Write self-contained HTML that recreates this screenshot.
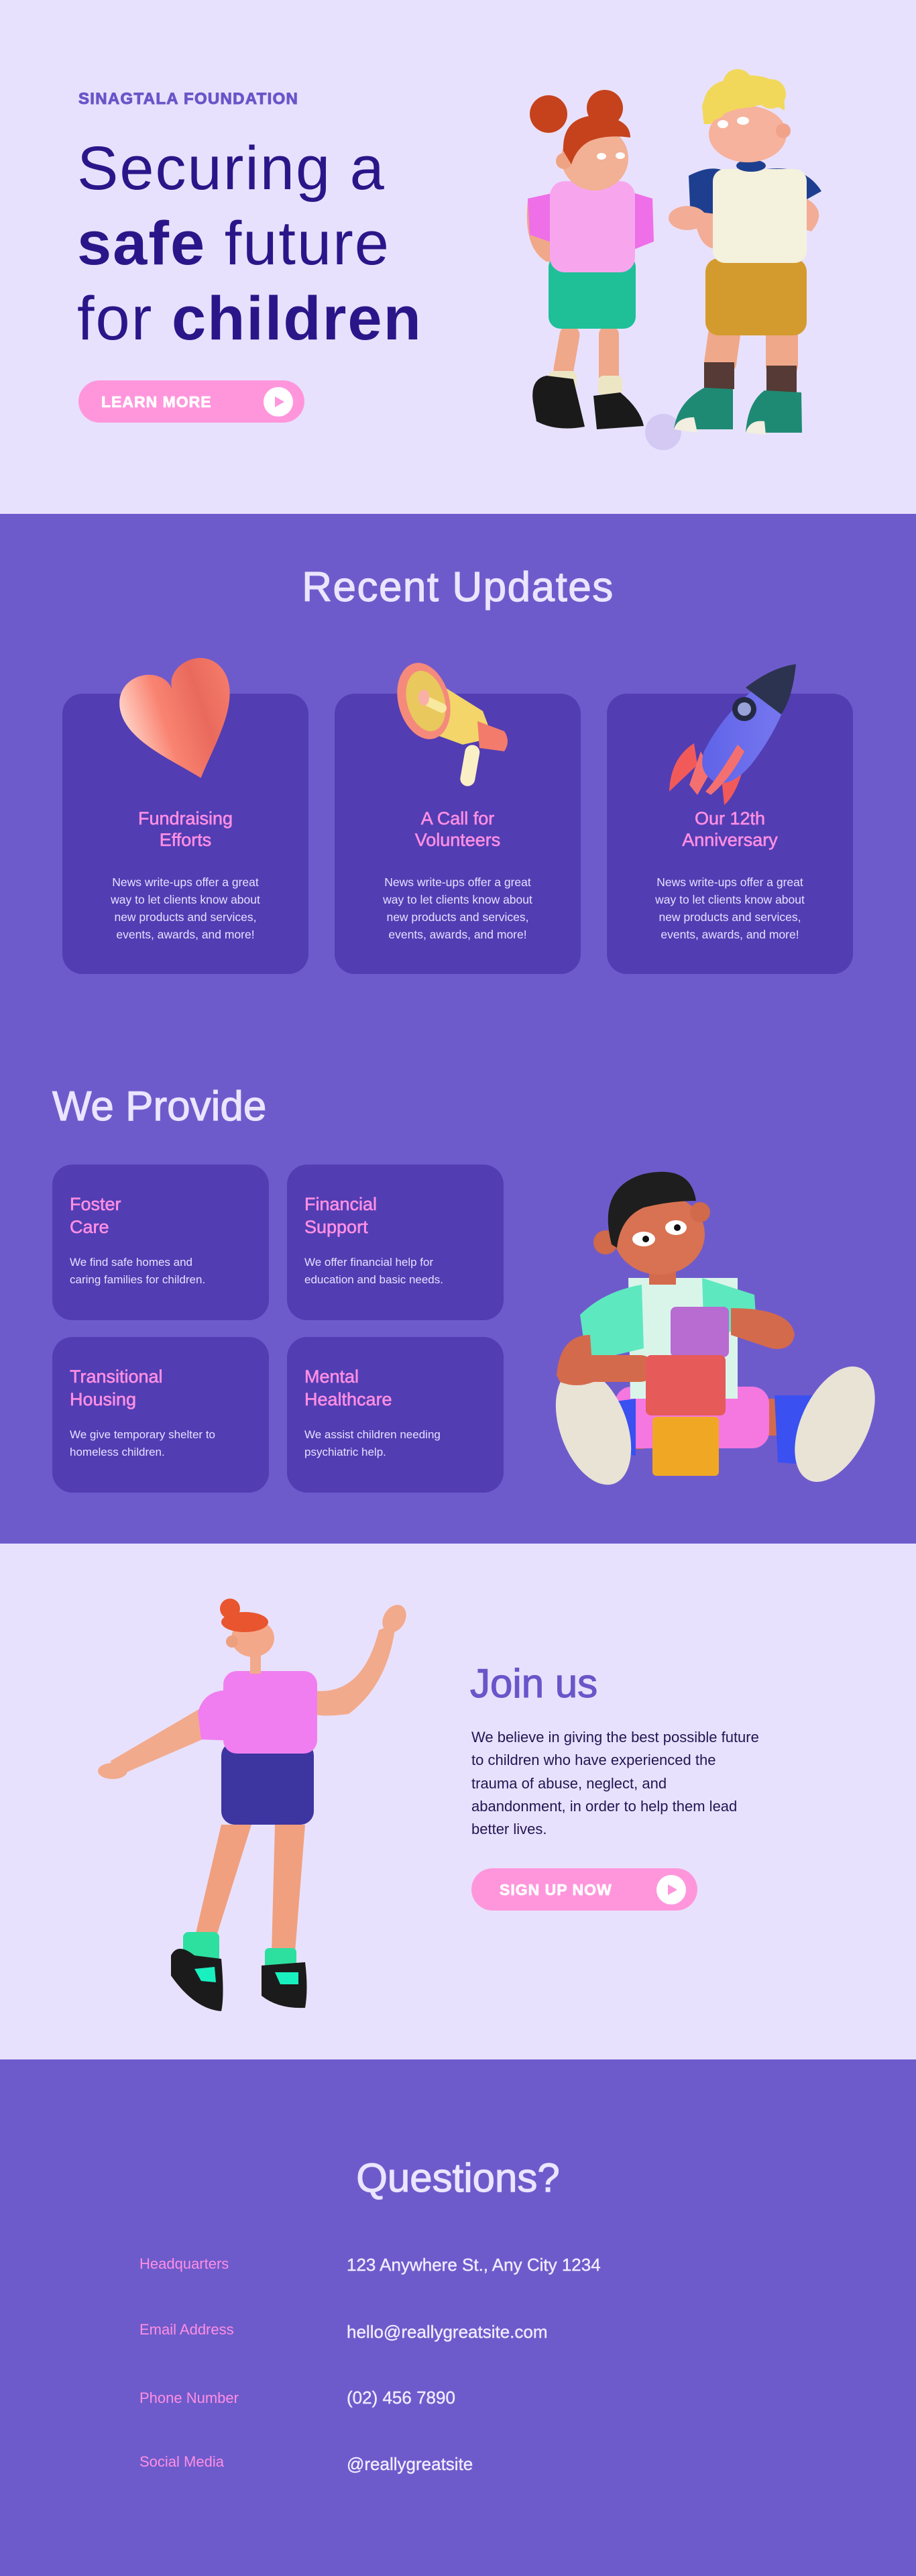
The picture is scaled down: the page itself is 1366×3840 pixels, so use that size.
<!DOCTYPE html>
<html><head><meta charset="utf-8">
<style>
*{margin:0;padding:0;box-sizing:border-box}
html,body{width:1366px;height:3840px;overflow:hidden}
body{position:relative;font-family:"Liberation Sans",sans-serif;background:#6e5bcb}
.abs{position:absolute}
.sec{position:absolute;left:0;width:1366px}
.t{position:absolute;white-space:nowrap}
.med{-webkit-text-stroke:1.2px currentColor}
.card{position:absolute;background:#523db3;border-radius:30px}
.ct{position:absolute;left:0;right:0;text-align:center;color:#ff8fe3;font-size:27px;line-height:32px;-webkit-text-stroke:0.6px #ff8fe3}
.cb{position:absolute;left:0;right:0;text-align:center;color:#e8e0ff;font-size:17.5px;line-height:26px}
.pt{position:absolute;left:26px;color:#ff8fe3;font-size:27px;line-height:34px;-webkit-text-stroke:0.6px #ff8fe3}
.pb{position:absolute;left:26px;color:#e8e0ff;font-size:17px;line-height:26px}
.btn{position:absolute;background:#ff96dc;border-radius:32px}
.btn span{position:absolute;color:#fff;font-weight:bold;font-size:23px;letter-spacing:1px;-webkit-text-stroke:0.8px #fff}
.btn i{position:absolute;background:#fff;border-radius:50%}
.lab{position:absolute;left:208px;color:#ff8fe3;font-size:22px}
.val{position:absolute;left:517px;color:#f0ebff;font-size:26px;-webkit-text-stroke:0.4px #f0ebff}
</style></head><body>

<!-- HERO -->
<div class="sec" style="top:0;height:766px;background:#e8e1fd"></div>
<div class="t" style="left:117px;top:134px;font-size:24px;font-weight:bold;color:#6b55c9;letter-spacing:1.3px;-webkit-text-stroke:1px #6b55c9">SINAGTALA FOUNDATION</div>
<div class="t" style="left:115px;top:195px;font-size:92px;line-height:112px;color:#2b1689;letter-spacing:2px">Securing a<br><b>safe</b> future<br>for <b>children</b></div>
<div class="btn" style="left:117px;top:567px;width:337px;height:63px">
  <span style="left:34px;top:19px">LEARN MORE</span>
  <i style="left:276px;top:10px;width:44px;height:44px"></i>
  <svg class="abs" style="left:290px;top:22px" width="20" height="20"><polygon points="3,2 17,10 3,18" fill="#ff96dc"/></svg>
</div>

<!-- RECENT UPDATES -->
<div class="t med" style="left:0;width:1366px;text-align:center;top:840px;font-size:62px;color:#ebe5ff;letter-spacing:1.5px">Recent Updates</div>
<div class="card" style="left:93px;top:1034px;width:367px;height:418px">
  <div class="ct" style="top:170px">Fundraising<br>Efforts</div>
  <div class="cb" style="top:268px">News write-ups offer a great<br>way to let clients know about<br>new products and services,<br>events, awards, and more!</div>
</div>
<div class="card" style="left:499px;top:1034px;width:367px;height:418px">
  <div class="ct" style="top:170px">A Call for<br>Volunteers</div>
  <div class="cb" style="top:268px">News write-ups offer a great<br>way to let clients know about<br>new products and services,<br>events, awards, and more!</div>
</div>
<div class="card" style="left:905px;top:1034px;width:367px;height:418px">
  <div class="ct" style="top:170px">Our 12th<br>Anniversary</div>
  <div class="cb" style="top:268px">News write-ups offer a great<br>way to let clients know about<br>new products and services,<br>events, awards, and more!</div>
</div>

<!-- WE PROVIDE -->
<div class="t med" style="left:78px;top:1614px;font-size:62px;color:#ebe5ff">We Provide</div>
<div class="card" style="left:78px;top:1736px;width:323px;height:232px">
  <div class="pt" style="top:42px">Foster<br>Care</div>
  <div class="pb" style="top:133px">We find safe homes and<br>caring families for children.</div>
</div>
<div class="card" style="left:428px;top:1736px;width:323px;height:232px">
  <div class="pt" style="top:42px">Financial<br>Support</div>
  <div class="pb" style="top:133px">We offer financial help for<br>education and basic needs.</div>
</div>
<div class="card" style="left:78px;top:1993px;width:323px;height:232px">
  <div class="pt" style="top:42px">Transitional<br>Housing</div>
  <div class="pb" style="top:133px">We give temporary shelter to<br>homeless children.</div>
</div>
<div class="card" style="left:428px;top:1993px;width:323px;height:232px">
  <div class="pt" style="top:42px">Mental<br>Healthcare</div>
  <div class="pb" style="top:133px">We assist children needing<br>psychiatric help.</div>
</div>

<!-- JOIN US -->
<div class="sec" style="top:2301px;height:769px;background:#e8e1fd"></div>
<div class="t med" style="left:701px;top:2475px;font-size:60px;color:#6b55c9">Join us</div>
<div class="t" style="left:703px;top:2573px;font-size:22px;line-height:34.3px;color:#231552">We believe in giving the best possible future<br>to children who have experienced the<br>trauma of abuse, neglect, and<br>abandonment, in order to help them lead<br>better lives.</div>
<div class="btn" style="left:703px;top:2785px;width:337px;height:63px">
  <span style="left:42px;top:19px">SIGN UP NOW</span>
  <i style="left:276px;top:10px;width:44px;height:44px"></i>
  <svg class="abs" style="left:290px;top:22px" width="20" height="20"><polygon points="3,2 17,10 3,18" fill="#ff96dc"/></svg>
</div>

<!-- QUESTIONS -->
<div class="t med" style="left:0;width:1366px;text-align:center;top:3212px;font-size:60px;color:#ebe5ff">Questions?</div>
<div class="lab" style="top:3362px">Headquarters</div>
<div class="val" style="top:3361px">123 Anywhere St., Any City 1234</div>
<div class="lab" style="top:3460px">Email Address</div>
<div class="val" style="top:3461px">hello@reallygreatsite.com</div>
<div class="lab" style="top:3562px">Phone Number</div>
<div class="val" style="top:3559px">(02) 456 7890</div>
<div class="lab" style="top:3657px">Social Media</div>
<div class="val" style="top:3658px">@reallygreatsite</div>

<!-- ILLUSTRATIONS -->
<svg class="abs" style="left:0;top:0" width="1366" height="3840">
<defs>
<linearGradient id="hg" x1="0" x2="1"><stop offset="0" stop-color="#ffd0c4"/><stop offset=".35" stop-color="#f98371"/><stop offset=".7" stop-color="#e96a5d"/><stop offset="1" stop-color="#f47a69"/></linearGradient>
<linearGradient id="rk" x1="0" x2="1"><stop offset="0" stop-color="#5f63e8"/><stop offset="1" stop-color="#7a7af0"/></linearGradient>
</defs>
<!-- hero girl -->
<circle cx="989" cy="644" r="27" fill="#d3c9f3"/>
<rect x="830" y="485" width="30" height="80" rx="14" fill="#f0a88a" transform="rotate(10 845 525)"/>
<rect x="893" y="485" width="30" height="100" rx="14" fill="#f0a88a"/>
<rect x="818" y="553" width="42" height="30" rx="8" fill="#ede6c4"/>
<rect x="892" y="560" width="36" height="30" rx="8" fill="#ede6c4"/>
<path d="M795 600 Q790 565 815 560 L855 565 L872 636 Q830 644 800 628Z" fill="#1a1a1a"/>
<path d="M885 590 L925 585 Q955 610 960 635 L890 640Z" fill="#1a1a1a"/>
<path d="M787 300 Q780 370 815 390 L830 390 L835 300Z" fill="#f0a88a"/>
<rect x="818" y="380" width="130" height="110" rx="18" fill="#1fbf98"/>
<path d="M787 296 L860 280 L860 374 L790 350Z" fill="#ee6fe8"/>
<path d="M927 282 L973 296 L975 360 L940 374Z" fill="#ee6fe8"/>
<rect x="820" y="270" width="127" height="136" rx="22" fill="#f7a6ee"/>
<ellipse cx="887" cy="236" rx="50" ry="48" fill="#f2b095"/>
<circle cx="841" cy="240" r="12" fill="#eda384"/>
<circle cx="818" cy="170" r="28" fill="#c5421c"/>
<circle cx="902" cy="161" r="27" fill="#c5421c"/>
<path d="M840 225 Q838 175 887 172 Q940 175 940 205 Q905 200 880 210 Q860 220 852 245Z" fill="#c5421c"/>
<ellipse cx="897" cy="233" rx="7" ry="5" fill="#fff"/><ellipse cx="925" cy="232" rx="7" ry="5" fill="#fff"/>
<!-- hero boy -->
<rect x="1053" y="485" width="48" height="70" rx="14" fill="#f0a88a" transform="rotate(8 1077 520)"/>
<rect x="1142" y="485" width="48" height="75" rx="14" fill="#f0a88a"/>
<rect x="1050" y="540" width="45" height="40" fill="#553a35"/>
<rect x="1143" y="545" width="45" height="40" fill="#553a35"/>
<path d="M1005 640 Q1010 600 1050 578 L1093 580 L1093 640Z" fill="#1f8a74"/>
<path d="M1112 645 Q1115 600 1140 582 L1195 585 L1196 645Z" fill="#1f8a74"/>
<path d="M1005 640 Q1010 622 1035 622 L1040 645Z" fill="#f2eee0"/>
<path d="M1112 645 Q1118 625 1140 628 L1142 648Z" fill="#f2eee0"/>
<rect x="1052" y="385" width="151" height="115" rx="20" fill="#d39b2e"/>
<path d="M1027 262 Q1060 245 1080 255 L1080 348 L1030 330Z" fill="#1e3f8f"/>
<path d="M1143 252 Q1200 245 1225 285 L1180 310 L1143 300Z" fill="#1e3f8f"/>
<path d="M1035 315 Q1040 380 1080 370 L1075 320Z" fill="#f3ad96"/>
<ellipse cx="1025" cy="325" rx="28" ry="18" fill="#f3ad96"/>
<path d="M1190 290 Q1240 310 1210 345 L1160 330Z" fill="#f3ad96"/>
<ellipse cx="1165" cy="315" rx="30" ry="16" fill="#f3ad96"/>
<rect x="1063" y="252" width="140" height="140" rx="18" fill="#f4f1dc"/>
<ellipse cx="1120" cy="247" rx="22" ry="9" fill="#1e3f8f"/>
<ellipse cx="1115" cy="200" rx="58" ry="42" fill="#f6b29c"/>
<circle cx="1168" cy="195" r="11" fill="#f1a38a"/>
<path d="M1050 185 Q1040 130 1080 120 Q1110 108 1140 115 Q1172 125 1170 165 Q1150 150 1120 160 Q1080 162 1060 185Z" fill="#f1d85a"/>
<circle cx="1065" cy="160" r="18" fill="#f1d85a"/><circle cx="1100" cy="125" r="22" fill="#f1d85a"/><circle cx="1150" cy="140" r="22" fill="#f1d85a"/>
<ellipse cx="1078" cy="185" rx="8" ry="6" fill="#fff"/><ellipse cx="1108" cy="180" rx="9" ry="6" fill="#fff"/>

<!-- heart -->
<path transform="translate(273,1078) rotate(-18) scale(1.72) translate(-50,-52)" d="M50 22 C50 -2 8 -8 2 22 C-3 50 30 78 50 102 C70 78 103 50 98 22 C92 -8 50 -2 50 22Z" fill="url(#hg)"/>
<!-- megaphone -->
<rect x="690" y="1110" width="22" height="62" rx="11" fill="#fbefc5" transform="rotate(10 700 1140)"/>
<path d="M640 1010 L720 1060 L735 1100 L690 1110 L635 1090Z" fill="#f3d56a"/>
<path d="M712 1075 L752 1090 Q762 1105 752 1120 L715 1115Z" fill="#f27b6c"/>
<ellipse cx="632" cy="1045" rx="38" ry="58" fill="#f58a7c" transform="rotate(-15 632 1045)"/>
<ellipse cx="635" cy="1045" rx="28" ry="46" fill="#e9c85d" transform="rotate(-15 635 1045)"/>
<rect x="627" y="1035" width="42" height="14" rx="7" fill="#f8e9a0" transform="rotate(25 630 1042)"/>
<ellipse cx="632" cy="1040" rx="8" ry="12" fill="#f9b0a6"/>
<!-- rocket -->
<path d="M1035 1108 Q1000 1130 998 1180 L1040 1140Z" fill="#f25a5a"/>
<path d="M1110 1140 Q1098 1185 1080 1200 L1075 1150Z" fill="#f25a5a"/>
<path d="M1045 1120 L1060 1150 L1040 1185 L1028 1170Z" fill="#f47070"/>
<path d="M1187 990 Q1175 1070 1120 1140 Q1090 1175 1065 1165 Q1040 1150 1050 1120 Q1080 1060 1140 1015 Q1170 992 1187 990Z" fill="url(#rk)"/>
<path d="M1187 990 Q1182 1040 1165 1065 L1112 1025 Q1150 995 1187 990Z" fill="#2c3350"/>
<circle cx="1110" cy="1057" r="18" fill="#252a44"/><circle cx="1110" cy="1057" r="10" fill="#9aa3d8"/>
<path d="M1100 1110 Q1070 1160 1052 1180 L1060 1185 Q1090 1160 1110 1120Z" fill="#f47070"/>

<!-- blocks kid -->
<rect x="1085" y="2085" width="100" height="55" rx="25" fill="#d46a4c"/>
<rect x="920" y="2090" width="60" height="70" rx="25" fill="#d46a4c"/>
<rect x="917" y="2067" width="230" height="92" rx="25" fill="#f577e0"/>
<path d="M910 2090 L948 2085 L948 2170 L915 2165Z" fill="#3a50f0"/>
<path d="M1155 2080 L1225 2080 L1225 2185 L1160 2180Z" fill="#3a50f0"/>
<ellipse cx="885" cy="2127" rx="50" ry="90" fill="#e8e3d5" transform="rotate(-20 885 2127)"/>
<ellipse cx="1245" cy="2123" rx="50" ry="92" fill="#e8e3d5" transform="rotate(25 1245 2123)"/>
<path d="M937 1905 L1100 1905 L1100 2085 L940 2085Z" fill="#d9f5ea"/>
<path d="M865 1960 Q900 1925 957 1915 L960 2010 L875 2030Z" fill="#5ee8c0"/>
<path d="M1047 1905 L1125 1930 L1128 1975 L1050 1995Z" fill="#5ee8c0"/>
<path d="M830 2050 Q835 1990 880 1990 L885 2060 Q860 2070 835 2060Z" fill="#d46a4c"/>
<rect x="850" y="2020" width="125" height="40" rx="20" fill="#d46a4c"/>
<path d="M1090 1950 Q1180 1950 1185 1990 Q1180 2015 1150 2010 L1090 1990Z" fill="#d46a4c"/>
<rect x="1000" y="1948" width="87" height="75" rx="8" fill="#b86bd0"/>
<rect x="963" y="2020" width="119" height="90" rx="8" fill="#e65a5a"/>
<rect x="973" y="2112" width="99" height="88" rx="6" fill="#f0a824"/>
<rect x="968" y="1885" width="40" height="30" fill="#d46a4c"/>
<ellipse cx="983" cy="1840" rx="68" ry="60" fill="#d87252"/>
<circle cx="903" cy="1852" r="18" fill="#d06a4a"/>
<circle cx="1044" cy="1807" r="15" fill="#d06a4a"/>
<path d="M912 1855 Q890 1770 960 1750 Q1030 1735 1038 1790 Q1000 1790 960 1800 Q925 1815 920 1860Z" fill="#1e1e1e"/>
<ellipse cx="960" cy="1847" rx="17" ry="11" fill="#fff"/><ellipse cx="1008" cy="1830" rx="16" ry="11" fill="#fff"/>
<circle cx="963" cy="1847" r="5" fill="#111"/><circle cx="1010" cy="1830" r="5" fill="#111"/>

<!-- join girl -->
<path d="M330 2720 L375 2720 L320 2895 L290 2890Z" fill="#f0a07f"/>
<path d="M410 2720 L455 2720 L440 2910 L405 2910Z" fill="#f0a07f"/>
<path d="M465 2520 Q540 2530 565 2430 L590 2420 Q580 2510 520 2555 Q480 2560 468 2555Z" fill="#f2aa8c"/>
<ellipse cx="588" cy="2413" rx="16" ry="22" fill="#f2aa8c" transform="rotate(30 588 2413)"/>
<path d="M310 2540 L165 2625 L170 2650 L320 2585Z" fill="#f2aa8c"/>
<ellipse cx="168" cy="2640" rx="22" ry="12" fill="#f2aa8c"/>
<rect x="330" y="2597" width="138" height="123" rx="20" fill="#3d35a0"/>
<path d="M295 2553 Q305 2515 350 2520 L355 2595 L300 2593Z" fill="#f07ef0"/>
<rect x="333" y="2491" width="140" height="123" rx="20" fill="#f07ef0"/>
<rect x="373" y="2460" width="16" height="35" fill="#f2aa8c"/>
<ellipse cx="377" cy="2442" rx="32" ry="28" fill="#f4a88a"/>
<circle cx="346" cy="2447" r="9" fill="#eda07f"/>
<ellipse cx="365" cy="2418" rx="35" ry="15" fill="#e8552e"/>
<circle cx="343" cy="2398" r="15" fill="#e8552e"/>
<rect x="273" y="2880" width="54" height="45" rx="8" fill="#2de0a0"/>
<rect x="395" y="2904" width="47" height="32" rx="6" fill="#2de0a0"/>
<path d="M255 2915 Q265 2895 290 2915 L330 2920 Q335 2975 330 2998 Q290 2995 255 2945Z" fill="#1b1b1b"/>
<path d="M390 2930 L455 2925 Q460 2965 455 2993 Q415 2995 390 2975Z" fill="#1b1b1b"/>
<path d="M290 2935 L320 2932 L322 2955 L300 2953Z" fill="#19f0c0"/>
<path d="M410 2940 L445 2940 L445 2958 L418 2958Z" fill="#19f0c0"/>
</svg>
</body></html>
